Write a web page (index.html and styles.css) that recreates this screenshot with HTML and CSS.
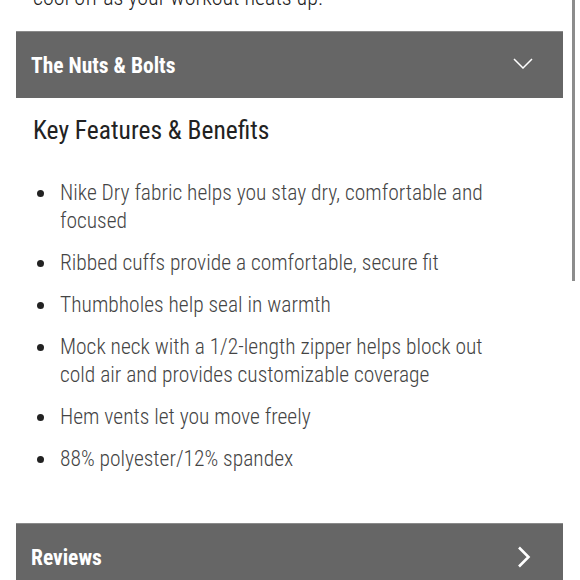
FILE: index.html
```html
<!DOCTYPE html>
<html>
<head>
<meta charset="utf-8">
<link rel="stylesheet" href="styles.css">
</head>
<body>
<div class="page">
  <p class="intro">cool off as your workout heats up.</p>
  <section class="accordion">
    <div class="acc-head">
      <span class="acc-title">The Nuts &amp; Bolts</span>
      <svg class="chev-down" width="20" height="11" viewBox="0 0 20 11"><path d="M1 1 L10 10 L19 1" fill="none" stroke="#fff" stroke-width="1.5"/></svg>
    </div>
    <div class="acc-body">
      <h2 class="features-title">Key Features &amp; Benefits</h2>
      <ul class="features">
        <li>Nike Dry fabric helps you stay dry, comfortable and focused</li>
        <li>Ribbed cuffs provide a comfortable, secure fit</li>
        <li>Thumbholes help seal in warmth</li>
        <li>Mock neck with a 1/2-length zipper helps block out cold air and provides customizable coverage</li>
        <li>Hem vents let you move freely</li>
        <li>88% polyester/12% spandex</li>
      </ul>
    </div>
  </section>
  <section class="accordion reviews">
    <div class="acc-head">
      <span class="acc-title">Reviews</span>
      <svg class="chev-right" width="14" height="22" viewBox="0 0 14 22"><path d="M2 1.5 L11.5 11 L2 20.5" fill="none" stroke="#fff" stroke-width="2.6"/></svg>
    </div>
  </section>
</div>
<div class="scrollbar"></div>
</body>
</html>
```
FILE: styles.css
```css
html, body {
  margin: 0;
  padding: 0;
  background: #fff;
  overflow: hidden;
}
body {
  font-family: "Roboto Condensed", Roboto, "Liberation Sans", sans-serif;
  font-stretch: condensed;
  height: 580px;
  position: relative;
}
.page {
  width: 547px;
  margin-left: 16px;
}
.intro {
  margin: -16px 0 0 0;
  padding: 0 17px;
  font-size: 22px;
  line-height: 28px;
  font-weight: 300;
  color: #222;
}
.accordion {
  margin-top: 19px;
}
.accordion.reviews {
  margin-top: 50px;
}
.acc-head {
  background: #666;
  border-top: 1px solid #8a8a8a;
  height: 67px;
  display: flex;
  align-items: center;
  justify-content: space-between;
  padding: 0 30px 0 15px;
  box-sizing: border-box;
}
.acc-title {
  color: #fff;
  font-weight: 700;
  font-size: 21.5px;
}
.chev-down {
  margin-top: -3px;
}
.chev-right {
  margin-right: 2px;
}
.acc-body {
  padding: 0 17px;
}
.features-title {
  margin: 16px 0 0 0;
  font-size: 25.5px;
  line-height: 32px;
  font-weight: 400;
  color: #222;
}
.features {
  list-style: none;
  margin: 33px 0 0 0;
  padding: 0 40px 0 0;
  color: #444;
  font-weight: 300;
  font-size: 21.5px;
  line-height: 28px;
}
.features li {
  position: relative;
  padding-left: 27px;
  margin-bottom: 14px;
}
.features li:last-child {
  margin-bottom: 0;
}
.features li::before {
  content: "";
  position: absolute;
  left: 4px;
  top: 11px;
  width: 7px;
  height: 7px;
  border-radius: 50%;
  background: #222;
}
.scrollbar {
  position: absolute;
  left: 572px;
  top: 0;
  width: 3px;
  height: 281px;
  background: #8c8c8c;
}
```
